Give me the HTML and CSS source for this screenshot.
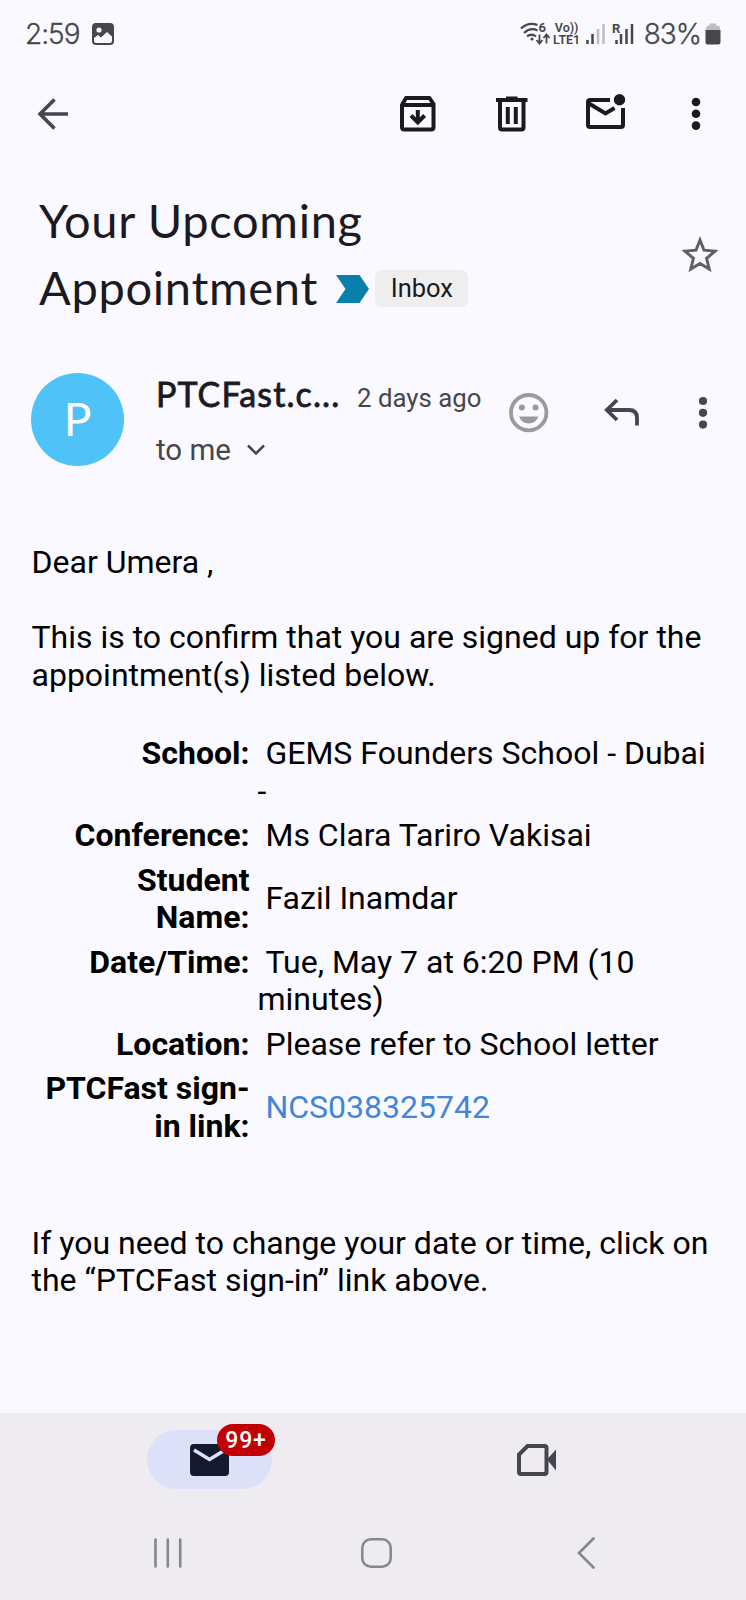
FILE: index.html
```html
<!DOCTYPE html>
<html lang="en">

<head>
    <meta charset="UTF-8">
    <meta name="viewport" content="width=device-width, initial-scale=1.0">
    <title>Your Upcoming Appointment</title>
    <link rel="stylesheet" href="styles.css">
</head>

<body>

    <!-- Phone status bar -->
    <div class="status-bar">
        <span class="time">2:59</span>
        <svg class="photo-icon" width="22" height="22" viewBox="0 0 22 22">
            <rect width="22" height="22" rx="4" fill="#47474a"/>
            <circle cx="7" cy="7" r="2.6" fill="#faf9ff"/>
            <path d="M2 15 L6 12 L9 14.5 L15 9 L20 13.5 V18 Q20 20 18 20 H4 Q2 20 2 18 Z" fill="#faf9ff"/>
        </svg>
        <div class="status-right">
            <svg class="wifi" width="30" height="24" viewBox="0 0 30 24" fill="none" stroke="#47474a" stroke-width="2.2">
                <path d="M1 6.5 Q8.500 -0.500 17.500 3"/>
                <path d="M4 11 Q10.500 5 17.500 8.500"/>
                <path d="M7 14.500 Q11.500 11 16 14.500"/>
                <circle cx="12" cy="17" r="1.600" fill="#47474a" stroke="none"/>
                <path d="M19.500 12.500 V21 M16.500 18 L19.500 21.500 L22.500 18 M26.500 21.500 V13 M23.500 16 L26.500 12.500 L29.500 16" stroke-width="1.800"/>
                <text x="18.500" y="9.500" class="tiny">6</text>
            </svg>
            <div class="volte"><span>Vo))</span><span>LTE1</span></div>
            <svg class="signal" width="20" height="22" viewBox="0 0 20 22">
                <path d="M1.500 17 V21 M6.500 11 V21" stroke="#47474a" stroke-width="2.500"/>
                <path d="M12 6 V21 M17.500 1 V21" stroke="#bdbcc2" stroke-width="2.500"/>
            </svg>
            <svg class="signal-roam" width="22" height="22" viewBox="0 0 22 22">
                <path d="M4.500 17 V21 M9 11 V21 M14.500 6 V21 M20 1 V21" stroke="#47474a" stroke-width="2.500"/>
                <text x="0" y="10" class="tiny">R</text>
            </svg>
            <span class="percent">83%</span>
            <svg width="16" height="22" viewBox="0 0 16 22">
                <path d="M1 7 V5 Q1 2.500 3.500 2.500 H4.500 V0.500 H11 V2.500 H12.500 Q15 2.500 15 5 V7 Z" fill="#bdbcc2"/>
                <path d="M0.500 7 H15.500 V19 Q15.500 21.500 13 21.500 H3 Q0.500 21.500 0.500 19 Z" fill="#47474a"/>
            </svg>
        </div>
    </div>

    <!-- Mail toolbar -->
    <div class="toolbar">
        <svg class="back" width="32" height="32" viewBox="0 0 32 32" fill="none" stroke="#46464d" stroke-width="3.600">
            <path d="M31 16 H3 M17.500 1.500 L3 16 L17.500 30.500"/>
        </svg>
        <svg class="archive" width="36" height="36" viewBox="0 0 36 36" fill="none" stroke="#1a1a1f" stroke-width="4">
            <path d="M2 9 V31 Q2 33.500 4.500 33.500 H31 Q33.500 33.500 33.500 31 V8 L29.500 2 H6 Z" stroke-linejoin="round"/>
            <path d="M2 9 H33.500" stroke-width="4"/>
            <path d="M17.800 14 V25 M11 19.500 L17.800 26.300 L24.600 19.500"/>
        </svg>
        <svg class="trash" width="32" height="36" viewBox="0 0 32 36" fill="none" stroke="#1a1a1f" stroke-width="4">
            <path d="M0 4 H31.500 M10 2.500 H21.500"/>
            <path d="M4 4 V31.500 Q4 33.500 6 33.500 H25.500 Q27.500 33.500 27.500 31.500 V4"/>
            <path d="M11.800 11 V28 M19.800 11 V28"/>
        </svg>
        <svg class="unread" width="40" height="36" viewBox="0 0 40 36" fill="none" stroke="#1a1a1f" stroke-width="4">
            <path d="M24 6 H4 Q2 6 2 8 V31 Q2 33 4 33 H35 Q37 33 37 31 V14"/>
            <path d="M3 9.500 L19.500 19.500 L28.500 14"/>
            <circle cx="33.500" cy="5.700" r="5.700" fill="#1a1a1f" stroke="none"/>
        </svg>
        <svg width="10" height="34" viewBox="0 0 10 34" fill="#1a1a1f">
            <circle cx="5" cy="5" r="4.300"/><circle cx="5" cy="16.800" r="4.300"/><circle cx="5" cy="28.600" r="4.300"/>
        </svg>
    </div>

    <!-- Subject -->
    <div class="subject">
        <h1>Your Upcoming<br>Appointment
            <svg class="marker" width="33" height="28" viewBox="0 0 33 28"><path d="M0 0 H23.500 L33 14 L23.500 28 H0 L9.500 14 Z" fill="#0880ab"/></svg><span class="label">Inbox</span>
        </h1>
        <svg class="star" width="38" height="37" viewBox="0 0 38 37" fill="none" stroke="#5f6064" stroke-width="3">
            <path d="M19 4 L23 14.200 L34 15.100 L25.600 22.400 L28.200 33 L19 27.400 L9.800 33 L12.400 22.400 L4 15.100 L15 14.200 Z"/>
        </svg>
    </div>

    <!-- Sender details -->
    <div class="sender">
        <div class="avatar">P</div>
        <div class="sender-info">
            <div class="from"><span class="name">PTCFast.c...</span><span class="date">2 days ago</span></div>
            <div class="to">to me
                <svg width="18" height="12" viewBox="0 0 18 12" fill="none" stroke="#46464d" stroke-width="2.500"><path d="M1 1.500 L9 9.500 L17 1.500"/></svg>
            </div>
        </div>
        <svg class="smile" width="40" height="40" viewBox="0 0 40 40">
            <circle cx="19.700" cy="19.700" r="17.700" fill="none" stroke="#999b9f" stroke-width="3.800"/>
            <circle cx="12.900" cy="14.600" r="3" fill="#999b9f"/><circle cx="26.500" cy="14.600" r="3" fill="#999b9f"/>
            <path d="M10 23.500 H29.500 Q26.500 30.500 19.700 30.500 Q13 30.500 10 23.500 Z" fill="#999b9f"/>
        </svg>
        <svg class="reply" width="36" height="30" viewBox="0 0 36 30" fill="none" stroke="#46464d" stroke-width="3.800">
            <path d="M13 2 L2.800 12 L13 22 M3 12 H25 Q33 12 33 20 V27.500"/>
        </svg>
        <svg class="more" width="10" height="34" viewBox="0 0 10 34" fill="#46464d">
            <circle cx="5" cy="5" r="4.100"/><circle cx="5" cy="16.800" r="4.100"/><circle cx="5" cy="28.600" r="4.100"/>
        </svg>
    </div>

    <!-- Message -->
    <div class="message">
        <p>Dear Umera ,</p>
        <p>This is to confirm that you are signed up for the<br>appointment(s) listed below.</p>
        <table class="details">
            <tr><th>School:</th><td>&nbsp;GEMS Founders School - Dubai<br>-</td></tr>
            <tr><th>Conference:</th><td>&nbsp;Ms Clara Tariro Vakisai</td></tr>
            <tr><th>Student<br>Name:</th><td class="middle">&nbsp;Fazil Inamdar</td></tr>
            <tr><th>Date/Time:</th><td>&nbsp;Tue, May 7 at 6:20 PM (10<br>minutes)</td></tr>
            <tr><th>Location:</th><td>&nbsp;Please refer to School letter</td></tr>
            <tr><th>PTCFast sign-<br>in link:</th><td class="middle">&nbsp;<a href="#">NCS038325742</a></td></tr>
        </table>
        <p>If you need to change your date or time, click on<br>the “PTCFast sign-in” link above.</p>
    </div>

    <!-- Bottom navigation -->
    <div class="bottom">
        <div class="tabs">
            <div class="tab-mail">
                <svg width="40" height="32" viewBox="0 0 40 32">
                    <rect width="39" height="32" rx="4" fill="#141a2e"/>
                    <path d="M4 6 L19.500 15.500 L35 6" fill="none" stroke="#dce1f9" stroke-width="3.600"/>
                </svg>
                <span class="badge">99+</span>
            </div>
            <svg class="tab-meet" width="40" height="32" viewBox="0 0 40 32">
                <path d="M10.500 2 H27.500 Q29.500 2 29.500 4 V28 Q29.500 30 27.500 30 H4 Q2 30 2 28 V10.500 Z" fill="none" stroke="#44464f" stroke-width="4"/>
                <path d="M30 15.500 L39 5.500 V26.500 Z" fill="#44464f"/>
            </svg>
        </div>
        <div class="system-nav">
            <svg class="recents" width="28" height="30" viewBox="0 0 28 30" stroke="#87868b" stroke-width="2.600" stroke-linecap="round"><path d="M1.500 1.500 V28.500 M13.800 1.500 V28.500 M26.200 1.500 V28.500"/></svg>
            <svg class="home" width="31" height="30" viewBox="0 0 31 30"><rect x="1.300" y="1.300" width="28.400" height="27.400" rx="8.500" fill="none" stroke="#87868b" stroke-width="2.500"/></svg>
            <svg width="18" height="32" viewBox="0 0 18 32" fill="none" stroke="#87868b" stroke-width="2.600" stroke-linecap="round"><path d="M16.500 1.500 L2 16 L16.500 30.500"/></svg>
        </div>
    </div>

</body>

</html>
```
FILE: styles.css
```css
body {
    margin: 0;
    height: 1600px;
    display: flex;
    flex-direction: column;
    background-color: #faf9ff;
    color: #1a1a1f;
    font-family: Roboto, sans-serif;
    overflow: hidden;
}

svg {
    display: block;
    flex-shrink: 0;
    overflow: visible;
}

.status-bar {
    display: flex;
    align-items: center;
    height: 68px;
    padding: 0 25px 0 25px;
    color: #47474a;
    font-family: Inter, sans-serif;
}

.time {
    width: 67px;
    font-size: 28px;
    font-weight: 300;
    letter-spacing: -1px;
    -webkit-text-stroke: 0.3px #47474a;
}

.status-right {
    display: flex;
    align-items: center;
    margin-left: auto;
}

.tiny {
    font-family: Roboto, sans-serif;
    font-size: 13px;
    font-weight: bold;
    fill: #47474a;
    stroke: none;
}

.volte {
    display: flex;
    flex-direction: column;
    width: 28px;
    margin: 0 5px 0 3px;
    text-align: center;
    font: 600 12.500px/12px Roboto, sans-serif;
}

.signal-roam {
    margin-left: 6px;
}

.percent {
    margin: 0 4px 0 10px;
    font-size: 28px;
    font-weight: 300;
    letter-spacing: -1px;
    -webkit-text-stroke: 0.3px #47474a;
}

.toolbar {
    display: flex;
    align-items: center;
    height: 92px;
    padding: 0 45px 0 37px;
}

.archive {
    margin-left: auto;
}

.trash {
    margin-left: 60px;
}

.unread {
    margin: -4px 65px 0 58px;
}

.subject {
    display: flex;
    height: 172px;
    padding: 27px 27px 0 39px;
    box-sizing: border-box;
}

.subject h1 {
    flex: 1;
    margin: 0;
    font: 400 47px/67px Lato, sans-serif;
    letter-spacing: 0.7px;
    white-space: nowrap;
}

.marker {
    display: inline-block;
    margin-left: 5px;
    vertical-align: 2px;
}

.label {
    display: inline-block;
    height: 37px;
    margin-left: 6px;
    padding: 0 15px 0 16px;
    border-radius: 7px;
    background-color: #eeeeee;
    font: 400 25.500px/36px Roboto, sans-serif;
    letter-spacing: 0;
    vertical-align: 8px;
}

.star {
    margin-top: 49px;
}

.sender {
    display: flex;
    align-items: flex-start;
    height: 212px;
    padding: 41px 38px 0 31px;
    box-sizing: border-box;
}

.avatar {
    width: 93px;
    height: 93px;
    border-radius: 50%;
    background-color: #4fc3f7;
    color: white;
    font: 400 46px/91px Lato, sans-serif;
    text-align: center;
}

.sender-info {
    width: 353px;
    margin-left: 32px;
    white-space: nowrap;
}

.from {
    display: flex;
    align-items: baseline;
    height: 56px;
    margin-top: -1px;
    line-height: 44px;
}

.name {
    width: 201px;
    font-family: Lato, sans-serif;
    font-size: 34px;
    letter-spacing: 1.100px;
    -webkit-text-stroke: 0.8px #1a1a1f;
}

.date {
    color: #46464d;
    font-size: 25.800px;
}

.to {
    display: flex;
    align-items: center;
    gap: 16px;
    color: #46464d;
    font-size: 29.500px;
    line-height: 44px;
}

.smile {
    margin-top: 20px;
}

.reply {
    margin: 25px 0 0 55px;
}

.more {
    margin: 23px 0 0 auto;
}

.message {
    padding: 0 31.500px;
    color: #000;
    font-size: 32px;
    line-height: 37.500px;
    white-space: nowrap;
}

.message p {
    margin: 0 0 37.500px;
}

.details {
    margin: 0 0 76px;
    border-collapse: collapse;
}

.details th,
.details td {
    padding: 3.500px 0;
    text-align: left;
    vertical-align: top;
}

.details th {
    width: 218px;
    padding-right: 8px;
    text-align: right;
}

.details .middle {
    vertical-align: middle;
}

.details a {
    color: #4285d9;
    text-decoration: none;
}

.bottom {
    height: 187px;
    margin-top: auto;
    background-color: #eeecf1;
}

.tabs {
    display: flex;
    height: 94px;
    padding: 17px 0 0 147px;
    box-sizing: border-box;
}

.tab-mail {
    position: relative;
    display: flex;
    align-items: center;
    justify-content: center;
    width: 125px;
    height: 59px;
    border-radius: 30px;
    background-color: #dce1f9;
}

.badge {
    position: absolute;
    top: -6px;
    left: 70px;
    width: 58px;
    height: 32px;
    border-radius: 16px;
    background-color: #c00004;
    color: white;
    font: 500 23px/33px Roboto, sans-serif;
    letter-spacing: 0.8px;
    text-align: center;
}

.tab-meet {
    margin: 14px 0 0 245px;
}

.system-nav {
    display: flex;
    align-items: center;
    padding: 30px 0 0 154px;
}

.home {
    margin: 0 185px 0 179px;
}
```
